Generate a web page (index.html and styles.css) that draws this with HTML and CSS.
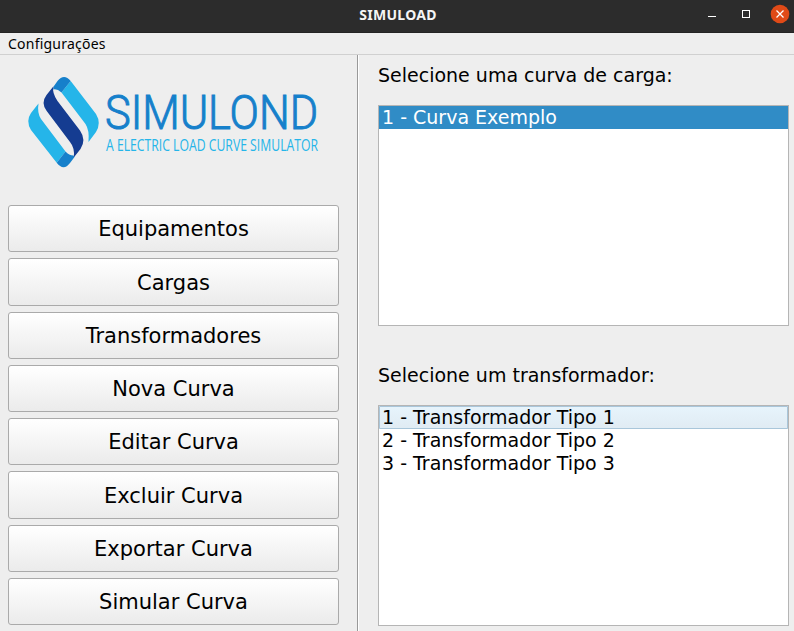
FILE: index.html
```html
<!DOCTYPE html>
<html lang="pt-BR">
<head>
<meta charset="utf-8">
<title>SIMULOAD</title>
<link rel="stylesheet" href="styles.css">
</head>
<body>
<header class="titlebar">
  <span class="title">SIMULOAD</span>
  <svg class="controls" width="94" height="33" viewBox="0 0 94 33">
    <path d="M8 16.500h8" stroke="#fff" fill="none"/>
    <rect x="42.500" y="10.500" width="7" height="7" stroke="#fff" fill="none"/>
    <circle cx="80" cy="14" r="9.300" fill="#e04a17"/>
    <path d="M76.500 10.500l7 7m0-7l-7 7" stroke="#fff" stroke-width="1.300"/>
  </svg>
</header>
<nav class="menubar"><span class="menu">Configurações</span></nav>
<main class="content">
  <section class="left">
    <svg class="logo" width="331" height="144" viewBox="8 55 331 144">
      <path fill="#25b5e9" d="M38.500 103.500L31 113Q25.500 121 31 130L56.700 162.700L65.500 151.500L41 119Q37 113 38.500 103.500Z"/>
      <path fill="#25b5e9" d="M70.700 81L61.500 92.500L85.500 124Q89.500 130 88.500 142L96 132Q101.500 123 96 114Z"/>
      <path fill="#1680cb" d="M53.300 87L57.500 81Q64 73 70.700 81L61.500 92.500Q57 88.500 53.300 89.500Z"/>
      <path fill="#1680cb" d="M56.700 162.700L65.500 151.500Q69 155.500 73.500 155.500L74.500 157L70 163Q63.500 171.500 56.700 162.700Z"/>
      <path fill="#153c91" d="M53.300 86.500L46.500 95Q40.500 103 46.700 111L70 142Q75 148 73.800 157.500L80.500 149Q86.500 140 80 130.500L57.500 101Q52 93 53.300 86.500Z"/>
      <text class="wordmark" x="105" y="129" textLength="213" lengthAdjust="spacingAndGlyphs">SIMULOND</text>
      <text class="tagline" x="106" y="151" textLength="212" lengthAdjust="spacingAndGlyphs">A ELECTRIC LOAD CURVE SIMULATOR</text>
    </svg>
    <div class="buttons">
      <button>Equipamentos</button>
      <button>Cargas</button>
      <button>Transformadores</button>
      <button>Nova Curva</button>
      <button>Editar Curva</button>
      <button>Excluir Curva</button>
      <button>Exportar Curva</button>
      <button>Simular Curva</button>
    </div>
  </section>
  <section class="right">
    <h2>Selecione uma curva de carga:</h2>
    <ul class="list">
      <li class="selected">1 - Curva Exemplo</li>
    </ul>
    <h2 class="second">Selecione um transformador:</h2>
    <ul class="list">
      <li class="hover">1 - Transformador Tipo 1</li>
      <li>2 - Transformador Tipo 2</li>
      <li>3 - Transformador Tipo 3</li>
    </ul>
  </section>
</main>
</body>
</html>
```

FILE: styles.css
```css
* { box-sizing: border-box; }
body {
  margin: 0;
  height: 631px;
  overflow: hidden;
  display: flex;
  flex-direction: column;
  background: #eee;
  color: #000;
  font-family: "DejaVu Sans", sans-serif;
}
.titlebar {
  height: 33px;
  flex: none;
  display: grid;
  grid-template-columns: 94px 1fr 94px;
  background: #2c2c2c;
  border-bottom: 1px solid #242424;
}
.title {
  grid-column: 2;
  padding-left: 2px;
  text-align: center;
  color: #f5f5f5;
  font: bold 14px/30px "Noto Sans", sans-serif;
  letter-spacing: .3px;
}
.menubar {
  height: 22px;
  flex: none;
  padding-left: 8px;
  border-bottom: 1px solid #d0d0d0;
  font: 14px/22px "Noto Sans", sans-serif;
  letter-spacing: .22px;
}
.content { flex: 1; display: flex; min-height: 0; }
.left {
  width: 358px;
  padding: 0 18px 0 8px;
  border-right: 1px solid #999;
  display: flex;
  flex-direction: column;
}
.logo { display: block; flex: none; }
.wordmark {
  font: 300 49px Roboto, sans-serif;
  fill: #1680cb;
  stroke: #1680cb;
  stroke-width: 1px;
}
.tagline { font: 16px "Open Sans", sans-serif; fill: #25b5e9; }
.buttons {
  margin-top: 6px;
  height: 420px;
  display: grid;
  grid-template-rows: repeat(8, 1fr);
  gap: 6px;
}
button {
  min-height: 0;
  padding: 1.400px 0 0;
  border: 1px solid #aaa;
  border-radius: 3px;
  background: linear-gradient(#fff, #ebebeb);
  color: #000;
  font: 21px "DejaVu Sans", sans-serif;
}
.right {
  flex: 1;
  padding: 6px 5px 0 20px;
  border-left: 1px solid #fff;
}
h2 { margin: 0 0 0 -1px; height: 44px; font-size: 19px; font-weight: 400; line-height: 29px; }
.second { margin-top: 35px; }
.list {
  margin: 0 0 0 -1px;
  padding: 0;
  height: 221px;
  list-style: none;
  background: #fff;
  border: 1px solid #b5b5b5;
}
li { height: 23px; padding-left: 3px; font-size: 19px; line-height: 23px; }
.selected { background: #308cc6; color: #fff; }
.hover {
  background: linear-gradient(#e7f4fc, #e0ebf3);
  box-shadow: inset 0 0 0 1px #a9c6da;
  border-radius: 1px;
}
```
